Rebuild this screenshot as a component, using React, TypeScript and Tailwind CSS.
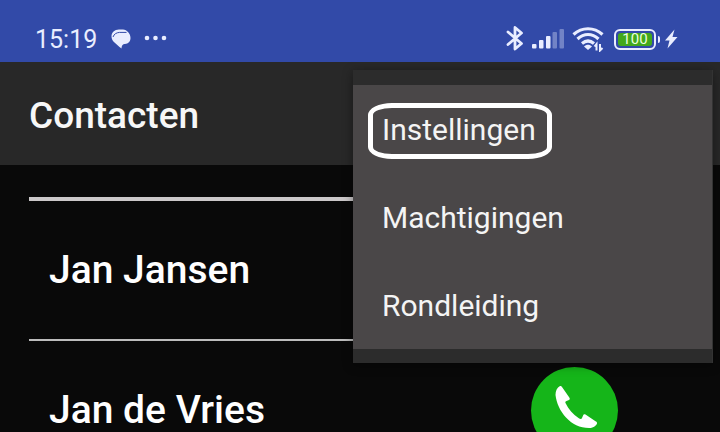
const menuItems = ["Instellingen", "Machtigingen", "Rondleiding"];
const contacts = ["Jan Jansen", "Jan de Vries"];

function StatusBar() {
  return (
    <div className="flex h-[62px] shrink-0 items-center justify-between bg-[#324aa8] pt-4 pr-[42px] pl-[35px] text-[#e9edff]">
      <div className="flex items-center">
        <time className="pt-0.5 text-[25px] leading-8">15:19</time>
        <svg className="ml-3.5 h-5 w-5" viewBox="0 0 20 20" fill="currentColor" aria-hidden="true">
          <path d="M8 .5H12C16 .8 19.500 4.500 19.500 9C19.500 12.500 17 14.800 14 15C12 15.200 10.800 16 10.500 19.500L8.500 18L3.500 13.500C1.500 12 .5 9.500 .5 7.500C.5 3.500 3.500 .5 8 .5Z" />
          <path d="M2 8C3 5 5.500 3.600 8.500 3.400H15.500" fill="none" stroke="#324aa8" strokeWidth="1" />
        </svg>
        <svg className="ml-3 h-5 w-6" viewBox="0 0 24 20" fill="currentColor" aria-hidden="true">
          <circle cx="4" cy="9" r="2.300" />
          <circle cx="12.500" cy="9" r="2.300" />
          <circle cx="21" cy="9" r="2.300" />
        </svg>
      </div>
      <div className="flex items-center">
        <svg className="h-[26px] w-[18px]" viewBox="0 0 18 26" fill="none" stroke="currentColor" strokeWidth="2.800" strokeLinejoin="round" strokeLinecap="round" aria-hidden="true">
          <path d="M2 6L15.500 17.500L9 23V1.500L15.500 7L2 18.500" />
        </svg>
        <svg className="ml-2 h-[26px] w-8" viewBox="0 0 32 26" aria-hidden="true">
          <g fill="currentColor">
            <rect x="0" y="18" width="4.500" height="4.500" rx="1" />
            <rect x="7" y="14" width="4.500" height="8.500" rx="1" />
            <rect x="14" y="10" width="4.500" height="12.500" rx="1" />
            <g opacity=".35">
              <rect x="20.500" y="6" width="4.500" height="16.500" rx="1" />
              <rect x="27.500" y="3" width="4.500" height="19.500" rx="1" />
            </g>
          </g>
        </svg>
        <svg className="ml-2 h-[26px] w-8" viewBox="0 0 32 26" fill="none" stroke="currentColor" strokeWidth="3.200" aria-hidden="true">
          <path d="M1.500 8.500C10 .8 22 .8 30.500 8.500" />
          <path d="M5.500 13C12 7 20 7 26.500 13" />
          <path d="M10 17.500C13.800 14.300 18.200 14.300 22 17.500" />
          <path d="M12 20.500C14.500 18.300 17.500 18.300 20 20.500L16 24Z" fill="currentColor" stroke="none" />
          <path d="M24.500 24.500V18L22.500 20.500M28 18V24.500L30.500 22" strokeWidth="2" />
        </svg>
        <div className="ml-2.5 flex h-[21px] w-[42px] items-center justify-center rounded-md border-2 border-[#e9edff] p-0.5">
          <span className="flex h-full w-full items-center justify-center rounded-[3px] bg-[#42a81c] text-[15px] leading-none text-[#eaffdf]">100</span>
        </div>
        <span className="ml-0.5 h-[7px] w-0.5 rounded-r-sm bg-[#e9edff]" />
        <svg className="ml-1 h-5 w-[14px]" viewBox="0 0 14 20" fill="currentColor" aria-hidden="true">
          <path d="M10.500 .5L1 11.500H5.500L3.500 19.500L13.500 8H8.500Z" />
        </svg>
      </div>
    </div>
  );
}

function OverflowMenu() {
  return (
    <div role="menu" className="absolute top-[70px] right-[7px] w-[360px] border-r border-[#333] bg-[#4a4748] shadow-[0_2px_10px_rgba(0,0,0,0.4)]">
      <div className="h-[15px] bg-[#2c2c2c]" />
      {menuItems.map((item, index) => (
        <button key={item} role="menuitem" className="relative flex h-[88px] w-full items-center px-[29px] pt-px text-left text-[30px] leading-9 text-[#f4f4f4]">
          {item}
          {index === 0 && (
            <span className="absolute top-[18px] left-[15px] h-14 w-[184px] rounded-[24px/12px] border-[5px] border-white" />
          )}
        </button>
      ))}
      <div className="h-[14px] bg-[#2c2c2c]" />
    </div>
  );
}

function CallButton({ name }: { name: string }) {
  return (
    <button aria-label={`Bel ${name}`} className="flex h-[87px] w-[87px] items-center justify-center rounded-full bg-[#15b519]">
      <svg className="h-12 w-12" viewBox="-3 0 48 48" fill="white" aria-hidden="true">
        <path d="M6 0C3 1.500 1.500 4.500 1.500 9C2.500 17 6 25 12 31.500C18 38 26 42 35 42C39 42 42 40 43 37.500C43.300 36.500 42.500 35.800 41.500 35.300L31.500 28.500C30.500 28 29.500 28 29.300 29L28 32C27.500 33.500 26 33 24.500 32C19 28.500 14.500 23 11.500 17C11 16 11.500 15.300 12.500 15L15 14C16 13.500 16 12.500 15.300 11.500L8 1C7.500 .2 7 -.3 6 0Z" />
      </svg>
    </button>
  );
}

export default function App() {
  return (
    <div className="relative flex h-screen flex-col overflow-hidden bg-[#090909] font-[Roboto,sans-serif]">
      <StatusBar />
      <header className="flex h-[103px] shrink-0 items-center bg-[#282828] px-[29px] pt-1">
        <h1 className="text-[37px] leading-10 font-medium text-[#f7f7f7]">Contacten</h1>
      </header>
      <ul className="mx-[29px] mt-8 border-t-4 border-[#cbc8c9]">
        {contacts.map((name) => (
          <li key={name} className="flex h-[140px] items-center justify-between border-b-2 border-[#bdbdbd] pr-[73px] pl-5">
            <span className="text-[39px] leading-[44px] font-medium text-white">{name}</span>
            <CallButton name={name} />
          </li>
        ))}
      </ul>
      <OverflowMenu />
    </div>
  );
}
